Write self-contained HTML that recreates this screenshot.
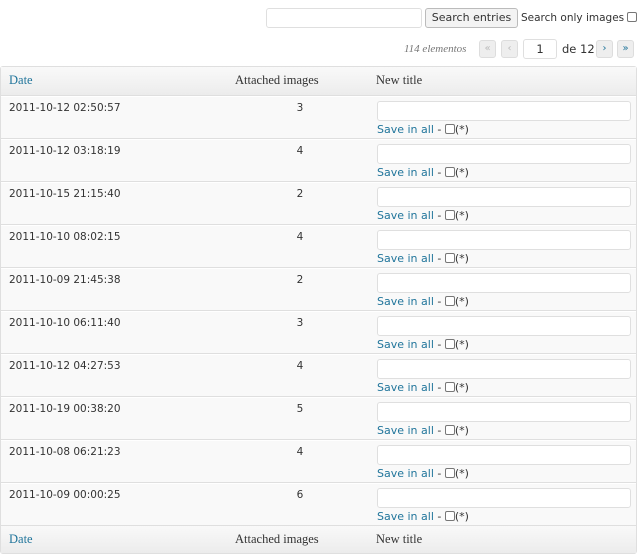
<!DOCTYPE html><html><head><style>
*{box-sizing:border-box;margin:0;padding:0}
body{width:640px;height:555px;background:#fff;font-family:"DejaVu Sans","Liberation Sans",sans-serif;font-size:10.5px;color:#333;position:relative;overflow:hidden}
.a{position:absolute;white-space:nowrap}
.inp{background:#fff;border:1px solid #dfdfdf;border-radius:3px}
.btn{background:#f3f3f3;border:1px solid #bbb;border-radius:3px;font-size:11px;color:#333;text-align:center;line-height:18px}
.pb{background:#eee;border:1px solid #ddd;border-radius:3px;width:17px;height:18px;font-size:10px;text-align:center;line-height:16px;color:#bbb}
.tbl{left:0;top:66px;width:637px;height:488px;border:1px solid #dfdfdf;border-radius:3px;background:#f9f9f9}
.hd{position:absolute;left:0;width:635px;height:29px;background:linear-gradient(#f9f9f9,#ececec);font-family:"Liberation Serif",serif;font-size:12.5px;color:#333}
.hd span{position:absolute;top:6px}
.row{position:absolute;left:0;width:635px;height:43px;border-top:1px solid #fff;border-bottom:1px solid #dfdfdf;background:#f9f9f9}
.row .d{position:absolute;left:8px;top:5px}
.row .n{position:absolute;left:290px;width:18px;text-align:center;top:5px}
.row .i{position:absolute;left:376px;top:4px;width:254px;height:20px}
.row .s{position:absolute;left:376px;top:26px;color:#21759b;font-size:11px}
.cb{display:inline-block;width:10px;height:10px;border:1px solid #777;border-radius:2px;vertical-align:-1px;background:#fff}
.s em{font-style:normal;color:#333}
</style></head><body>
<div class="a inp" style="left:266px;top:8px;width:156px;height:20px"></div>
<div class="a btn" style="left:425px;top:8px;width:93px;height:20px">Search entries</div>
<div class="a" style="left:521px;top:12px;font-size:10.5px">Search only images <span class="cb"></span></div>
<div class="a" style="left:404px;top:43px;font-family:'Liberation Serif',serif;font-style:italic;font-size:11px;color:#777">114 elementos</div>
<div class="a pb" style="left:479px;top:40px">«</div>
<div class="a pb" style="left:501px;top:40px">‹</div>
<div class="a inp" style="left:523px;top:39px;width:34px;height:20px;text-align:center;line-height:18px;font-size:11.5px">1</div>
<div class="a" style="left:562px;top:42px;font-size:11.5px">de 12</div>
<div class="a pb" style="left:596px;top:40px;color:#21759b">›</div>
<div class="a pb" style="left:617px;top:40px;color:#21759b">»</div>
<div class="a tbl">
<div class="hd" style="top:0;border-bottom:1px solid #dfdfdf"><span style="left:8px;color:#21759b">Date</span><span style="left:234px">Attached images</span><span style="left:375px">New title</span></div>
<div class="row" style="top:29px"><div class="d">2011-10-12 02:50:57</div><div class="n">3</div><div class="i inp"></div><div class="s">Save in all <em>- <span class="cb"></span>(*)</em></div></div>
<div class="row" style="top:72px"><div class="d">2011-10-12 03:18:19</div><div class="n">4</div><div class="i inp"></div><div class="s">Save in all <em>- <span class="cb"></span>(*)</em></div></div>
<div class="row" style="top:115px"><div class="d">2011-10-15 21:15:40</div><div class="n">2</div><div class="i inp"></div><div class="s">Save in all <em>- <span class="cb"></span>(*)</em></div></div>
<div class="row" style="top:158px"><div class="d">2011-10-10 08:02:15</div><div class="n">4</div><div class="i inp"></div><div class="s">Save in all <em>- <span class="cb"></span>(*)</em></div></div>
<div class="row" style="top:201px"><div class="d">2011-10-09 21:45:38</div><div class="n">2</div><div class="i inp"></div><div class="s">Save in all <em>- <span class="cb"></span>(*)</em></div></div>
<div class="row" style="top:244px"><div class="d">2011-10-10 06:11:40</div><div class="n">3</div><div class="i inp"></div><div class="s">Save in all <em>- <span class="cb"></span>(*)</em></div></div>
<div class="row" style="top:287px"><div class="d">2011-10-12 04:27:53</div><div class="n">4</div><div class="i inp"></div><div class="s">Save in all <em>- <span class="cb"></span>(*)</em></div></div>
<div class="row" style="top:330px"><div class="d">2011-10-19 00:38:20</div><div class="n">5</div><div class="i inp"></div><div class="s">Save in all <em>- <span class="cb"></span>(*)</em></div></div>
<div class="row" style="top:373px"><div class="d">2011-10-08 06:21:23</div><div class="n">4</div><div class="i inp"></div><div class="s">Save in all <em>- <span class="cb"></span>(*)</em></div></div>
<div class="row" style="top:416px"><div class="d">2011-10-09 00:00:25</div><div class="n">6</div><div class="i inp"></div><div class="s">Save in all <em>- <span class="cb"></span>(*)</em></div></div>
<div class="hd" style="top:459px;height:27px"><span style="left:8px;color:#21759b">Date</span><span style="left:234px">Attached images</span><span style="left:375px">New title</span></div>
</div>
</body></html>
